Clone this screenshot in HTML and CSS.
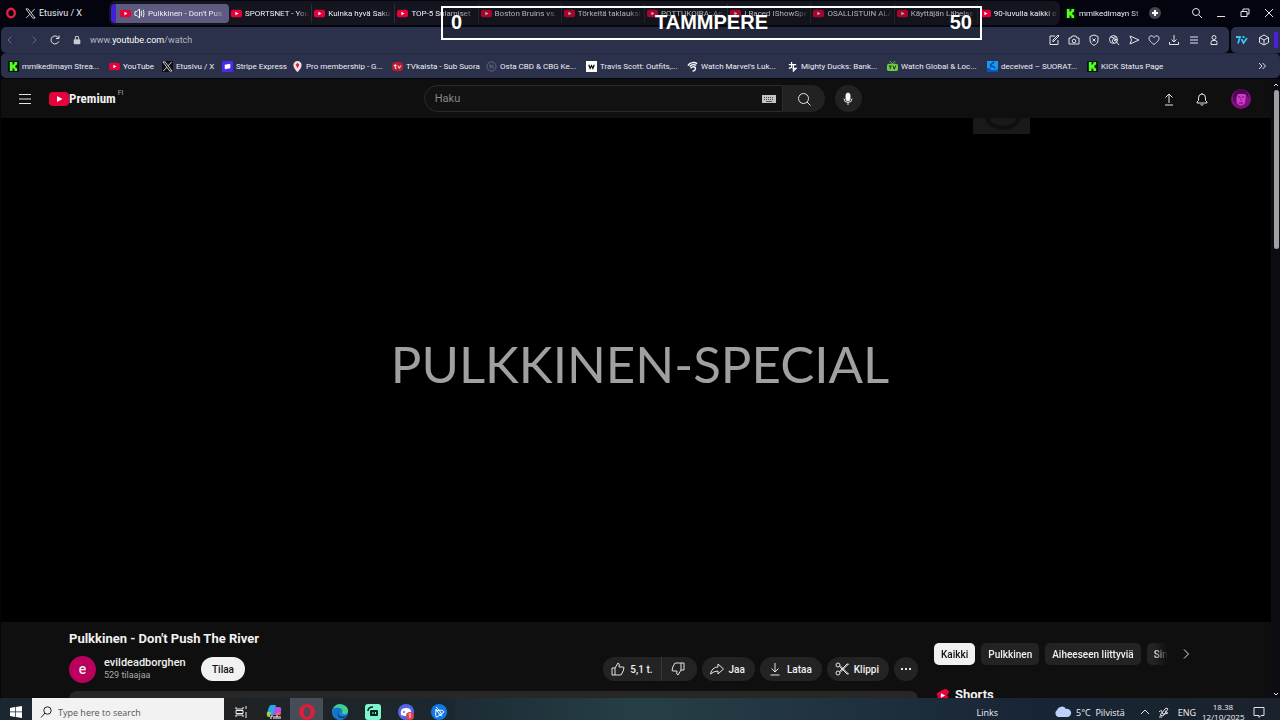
FILE: index.html
```html
<!DOCTYPE html>
<html lang="fi">
<head>
    <meta charset="UTF-8">
    <meta name="viewport" content="width=device-width, initial-scale=1.0">
    <title>Pulkkinen - Don't Push The River</title>
    <link rel="stylesheet" href="styles.css">
</head>
<body>
    <svg class="sprite" aria-hidden="true">
        <symbol id="yt" viewBox="0 0 20 14"><rect width="20" height="14" rx="4" fill="#e8003a"/><path d="M8 4l5.500 3L8 10z" fill="#fff"/></symbol>
        <symbol id="xlogo" viewBox="0 0 12 12"><path d="M1 1h2.500L11 11H8.500z" fill="none" stroke="#ddd"/><path d="M10.500 1L6.700 5.300M5.300 6.800L1.300 11" stroke="#ddd" fill="none"/></symbol>
        <symbol id="kick" viewBox="0 0 12 12"><rect width="12" height="12" rx="1" fill="#04160a"/><path d="M2 1h3v3h1V3h1V1h3v3H9v1H8v2h1v1h1v3H7V9H6V8H5v3H2z" fill="#5f2"/></symbol>
    </svg>

    <header class="browser">
        <div class="tab-bar">
            <svg class="opera" viewBox="0 0 12 12"><ellipse cx="6" cy="6" rx="3.800" ry="4.300" fill="none" stroke="#e5203f" stroke-width="2.400"/></svg>
            <a class="tab pinned" href="#"><svg><use href="#xlogo"/></svg><span>Etusivu / X</span></a>
            <nav class="tab-island" aria-label="Tabs">
                <a class="tab active" href="#"><svg><use href="#yt"/></svg><svg class="speaker" viewBox="0 0 12 12"><path d="M1 4h2l3-3v10L3 8H1zM8 3v6M10 2c1 2 1 6 0 8" fill="none" stroke="#fff"/></svg><span>Pulkkinen - Don't Pus</span></a>
                <a class="tab" href="#"><svg><use href="#yt"/></svg><span>SPORTSNET - You</span></a>
                <a class="tab" href="#"><svg><use href="#yt"/></svg><span>Kuinka hyvä Saku</span></a>
                <a class="tab" href="#"><svg><use href="#yt"/></svg><span>TOP-5 Sulamiset</span></a>
                <a class="tab" href="#"><svg><use href="#yt"/></svg><span>Boston Bruins vs.</span></a>
                <a class="tab" href="#"><svg><use href="#yt"/></svg><span>Törkeitä taklauksi</span></a>
                <a class="tab" href="#"><svg><use href="#yt"/></svg><span>POTTUKOIRA: An</span></a>
                <a class="tab" href="#"><svg><use href="#yt"/></svg><span>I Raced IShowSpe</span></a>
                <a class="tab" href="#"><svg><use href="#yt"/></svg><span>OSALLISTUIN ALA</span></a>
                <a class="tab" href="#"><svg><use href="#yt"/></svg><span>Käyttäjän Läheise</span></a>
                <a class="tab" href="#"><svg><use href="#yt"/></svg><span>90-luvulla kaikki o</span></a>
            </nav>
            <a class="tab kick-tab" href="#"><svg><use href="#kick"/></svg><span>mmikedimayn St</span></a>
            <button class="new-tab" aria-label="New tab"><svg viewBox="0 0 12 12"><circle cx="6" cy="6" r="6" fill="#444450" stroke="none"/><path d="M6 3v6M3 6h6" stroke="#fff" stroke-width="2"/></svg></button>
            <div class="window-buttons">
                <button aria-label="Search tabs"><svg viewBox="0 0 12 12"><circle cx="5" cy="5" r="3.500"/><path d="M7.500 7.500L11 11"/></svg></button>
                <button aria-label="Minimize"><svg viewBox="0 0 12 12"><path d="M2 9.500h8"/></svg></button>
                <button aria-label="Restore"><svg viewBox="0 0 12 12"><path d="M2 4.500h6v5H2zM4 4.500V2h6v5H8"/></svg></button>
                <button aria-label="Close"><svg viewBox="0 0 12 12"><path d="M2 2l8 8M10 2l-8 8"/></svg></button>
            </div>
        </div>

        <div class="address-row">
            <div class="address-bar">
                <button class="dim" aria-label="Back"><svg viewBox="0 0 12 12"><path d="M7.500 2.500L4 6l3.500 3.500"/></svg></button>
                <button class="dim" aria-label="Forward"><svg viewBox="0 0 12 12"><path d="M4.500 2.500L8 6 4.500 9.500"/></svg></button>
                <button aria-label="Reload"><svg viewBox="0 0 12 12"><path d="M9.700 7.500A4 4 0 1 1 9.500 4M10 1.500v3H7"/></svg></button>
                <svg class="lock" viewBox="0 0 12 12"><rect x="2" y="5" width="8" height="6" rx="1" fill="#c9cad2"/><path d="M4 5V3.500a2 2 0 0 1 4 0V5" fill="none" stroke="#c9cad2" stroke-width="1.300"/></svg>
                <span class="url">www.<b>youtube.com</b>/watch</span>
                <div class="tools">
                    <button aria-label="Edit page"><svg viewBox="0 0 12 12"><path d="M7 2H2v8.500h8V6M5 8V6l5-5 1 1-5 5z"/></svg></button>
                    <button aria-label="Snapshot"><svg viewBox="0 0 12 12"><path d="M1 4h2l1-2h4l1 2h2v6H1z"/><circle cx="6" cy="7" r="1.800"/></svg></button>
                    <button aria-label="Ad blocker"><svg viewBox="0 0 12 12"><path d="M6 1l4 1.500V6c0 3-2 4.500-4 5.300C4 10.500 2 9 2 6V2.500zM4.500 4.500l3 3M7.500 4.500l-3 3"/></svg></button>
                    <button aria-label="Translate"><svg viewBox="0 0 12 12"><circle cx="5.500" cy="5.500" r="4"/><path d="M3 3l3 1-2 3 2 2M7 2v4l4 5M6 7l2-2 2 2"/></svg></button>
                    <button aria-label="Send"><svg viewBox="0 0 12 12"><path d="M2 2l9 4-9 4 1.500-4z"/></svg></button>
                    <button aria-label="Favourite"><svg viewBox="0 0 12 12"><path d="M6 10.500C2 7.500 1 6 1 4.200 1 1.500 4.500 1 6 3.500 7.500 1 11 1.500 11 4.200 11 6 10 7.500 6 10.500z"/></svg></button>
                    <button aria-label="Downloads"><svg viewBox="0 0 12 12"><path d="M6 1v7M3.500 5.500L6 8l2.500-2.500M1.500 8v2.500h9V8"/></svg></button>
                    <button aria-label="Menu"><svg viewBox="0 0 12 12"><path d="M2 3h8M2 6h8M2 9h8"/></svg></button>
                    <button aria-label="Profile"><svg viewBox="0 0 12 12"><circle cx="6" cy="3.500" r="2"/><path d="M3 10.500V8.500q0-2 2-2h2q2 0 2 2v2z"/></svg></button>
                </div>
            </div>
            <div class="extensions">
                <button aria-label="7TV"><svg viewBox="0 0 12 12"><path d="M0 3h4L2 9.500M5.500 5l2 4L11 4M6.500 3h2" stroke="#35c4f0" stroke-width="1.800"/></svg></button>
                <button aria-label="Extensions"><svg viewBox="0 0 12 12"><path d="M6 1l4.500 2.500v5L6 11 1.500 8.500v-5zM1.500 3.500L6 6l4.500-2.500M6 6v5"/></svg></button>
                <i class="accent"></i>
            </div>
        </div>

        <nav class="bookmarks" aria-label="Bookmarks">
            <a href="#"><svg><use href="#kick"/></svg>mmikedimayn Strea...</a>
            <a href="#"><svg><use href="#yt"/></svg>YouTube</a>
            <a href="#"><svg class="x-box"><use href="#xlogo"/></svg>Etusivu / X</a>
            <a href="#"><svg viewBox="0 0 12 12"><rect width="12" height="12" rx="1" fill="#4a2af0"/><path d="M3 4l6-1v5L3 9z" fill="#fff"/></svg>Stripe Express</a>
            <a href="#"><svg viewBox="0 0 12 12"><path d="M6 0a4.500 4.500 0 0 1 4.500 4.500C10.500 7.500 6 12 6 12S1.500 7.500 1.500 4.500A4.500 4.500 0 0 1 6 0z" fill="#f5dfe0"/><path d="M6 2l2 2-2 4-2-4z" fill="#d2233d"/></svg>Pro membership - G...</a>
            <a href="#"><svg viewBox="0 0 12 12"><rect y="1" width="12" height="10" rx="4" fill="#b81c2e"/><path d="M2 5h3M3.500 3.500V8H5M6.500 5L8 8l1.500-3" fill="none" stroke="#fff"/></svg>TVkaista - Sub Suora</a>
            <a href="#"><svg viewBox="0 0 12 12"><circle cx="6" cy="6" r="5" fill="none" stroke="#666d80"/><path d="M4.500 8V4l3 4V4" fill="none" stroke="#666d80"/></svg>Osta CBD &amp; CBG Ke...</a>
            <a href="#"><svg viewBox="0 0 12 12"><rect width="12" height="12" fill="#fff"/><path d="M3 4l1.500 4L6 5l1.500 3L9 4" fill="none" stroke="#111" stroke-width="1.400"/></svg>Travis Scott: Outfits,...</a>
            <a href="#"><svg viewBox="0 0 12 12"><path d="M1 5c2-4 8-4 10-2M3 6c2-3 6-2 7-1M4 8c1-2 4-2 5-1M6 11c2 0 4-2 3-4" fill="none" stroke="#fff" stroke-width="1.500"/></svg>Watch Marvel's Luk...</a>
            <a href="#"><svg viewBox="0 0 12 12"><path d="M2 4h8M5 1v6l-3 1M7 4v7l3-3H6" fill="none" stroke="#fff" stroke-width="1.300"/></svg>Mighty Ducks: Bank...</a>
            <a href="#"><svg viewBox="0 0 12 12"><rect y="3" width="12" height="8" rx="2" fill="#72ce3c"/><path d="M3 0l3 3 3-3" fill="none" stroke="#72ce3c"/><path d="M2 5.500h3M3.500 5.500V9M6.500 5L8 9l1.500-4" fill="none" stroke="#123"/></svg>Watch Global &amp; Loc...</a>
            <a href="#"><svg viewBox="0 0 12 12"><rect width="12" height="12" fill="#159bf0"/><path d="M0 8q3-1 4 1t8 0v3H0z" fill="#0b50c0"/><path d="M8 1L4 4v2h3l2 2" fill="none" stroke="#0a3f9c" stroke-width="1.500"/></svg>deceived – SUORAT...</a>
            <a href="#"><svg><use href="#kick"/></svg>KICK Status Page</a>
            <button aria-label="More bookmarks"><svg viewBox="0 0 12 12"><path d="M3 3l3 3-3 3M6.500 3l3 3-3 3"/></svg></button>
        </nav>
    </header>

    <div class="viewport">
        <div class="page">
            <header class="masthead">
                <button class="menu" aria-label="Opas"><svg viewBox="0 0 14 14"><path d="M1 2.500h12M1 7h12M1 11.500h12"/></svg></button>
                <a class="logo" href="#"><svg><use href="#yt"/></svg><span>Premium</span><sup>FI</sup></a>
                <form class="search">
                    <label class="search-box">
                        <input type="text" placeholder="Haku" aria-label="Haku">
                        <svg viewBox="0 0 14 8"><rect width="14" height="8" fill="#c4c4c4"/><path d="M2 2.500h10M2 4.500h10" stroke="#444" stroke-dasharray="1 1"/><path d="M4 6.500h6" stroke="#555"/></svg>
                    </label>
                    <button type="button" aria-label="Hae"><svg viewBox="0 0 14 14"><circle cx="6.500" cy="6.500" r="5"/><path d="M10 10l3.500 3.500"/></svg></button>
                </form>
                <button class="mic" aria-label="Puhehaku"><svg viewBox="0 0 14 14"><rect x="5" y="1" width="4" height="8" rx="2" fill="#fff"/><path d="M3 6.500a4 4 0 0 0 8 0M7 10.500V13"/></svg></button>
                <div class="user-tools">
                    <button aria-label="Luo"><svg viewBox="0 0 14 14"><path d="M7 11V2M3.500 5.500L7 2l3.500 3.500M3 13h8"/></svg></button>
                    <button aria-label="Ilmoitukset"><svg viewBox="0 0 14 14"><path d="M7 1v1M2 11V10l1.500-1.500V6a3.500 4 0 0 1 7 0v2.500L12 10v1zM5.500 12.500q1.500 1.500 3 0"/></svg></button>
                    <button class="avatar" aria-label="Tili"><svg viewBox="0 0 20 20"><circle cx="10" cy="10" r="10" fill="#7c127f"/><path d="M5 4q5-4 10 1l-1 9q-4 5-8 0z" fill="#d23bc5"/><path d="M2 8q1-7 8-8 7 1 8 9l-4-4-7 0-2 4-1 6z" fill="#4a0852"/><path d="M7 8h2M11 8h2M8 14h4" stroke="#5e0a66" stroke-width="1.200"/><path d="M10 8l-.5 3.500h1.500" fill="none" stroke="#9a2497"/></svg></button>
                </div>
            </header>

            <section class="player" aria-label="Video">
                <p>PULKKINEN-SPECIAL</p>
                <svg class="channel-mark" viewBox="0 0 57 16"><rect width="57" height="16" fill="#191919"/><path d="M14 0q4 10 16 10T46 0" fill="none" stroke="#0f0f0f" stroke-width="4"/></svg>
            </section>

            <main class="watch">
                <div class="primary">
                    <h1>Pulkkinen - Don't Push The River</h1>
                    <div class="owner-row">
                        <span class="channel-avatar">e</span>
                        <div class="channel">
                            <a href="#">evildeadborghen</a>
                            <small>529 tilaajaa</small>
                        </div>
                        <button class="subscribe">Tilaa</button>
                        <div class="actions">
                            <div class="like-group">
                                <button><svg viewBox="0 0 14 14"><path d="M1 6h3v7H1zM4 6l3-5q2 0 1 4h4.500q1 1 0 2 .5 1-.5 2 0 1-1 2 0 2-2 2H4"/></svg>5,1 t.</button>
                                <button aria-label="En tykkää"><svg viewBox="0 0 14 14"><path d="M13 8h-3V1h3zM10 8l-3 5q-2 0-1-4H1.500q-1-1 0-2-.5-1 .5-2 0-1 1-2 0-2 2-2H10"/></svg></button>
                            </div>
                            <button><svg viewBox="0 0 14 14"><path d="M8 2l5.500 5L8 12V9Q4 9 .5 12 2 5 8 5z"/></svg>Jaa</button>
                            <button><svg viewBox="0 0 14 14"><path d="M7 1v9M3.500 6.500L7 10l3.500-3.500M2.500 13h9"/></svg>Lataa</button>
                            <button><svg viewBox="0 0 14 14"><circle cx="3" cy="3" r="2"/><circle cx="3" cy="11" r="2"/><path d="M4.500 4.500L12 12h1.500L5 3.500M4.500 9.500L12 2h1.500L5 10.500"/></svg>Klippi</button>
                            <button class="more" aria-label="Lisää"><svg viewBox="0 0 14 14"><path d="M2 7h2M6 7h2M10 7h2" stroke-width="2"/></svg></button>
                        </div>
                    </div>
                    <div class="description"></div>
                </div>
                <aside class="secondary">
                    <div class="chips">
                        <div class="chip-list">
                            <button class="selected">Kaikki</button>
                            <button>Pulkkinen</button>
                            <button>Aiheeseen liittyviä</button>
                            <button>Sin</button>
                        </div>
                        <button class="next" aria-label="Seuraava"><svg viewBox="0 0 14 14"><path d="M5 2.500L9.500 7 5 11.500"/></svg></button>
                    </div>
                    <h2><svg viewBox="0 0 14 14"><path d="M3 4l6-3q4 0 4 3.500L11 7q2 1 1 3l-6 3.500Q2 14 1.500 10L3 7.500Q0 6 3 4z" fill="#e8003a"/><path d="M5.500 5l4 2-4 2z" fill="#fff"/></svg>Shorts</h2>
                </aside>
            </main>
        </div>
        <div class="scrollbar">
            <svg viewBox="0 0 8 8"><path d="M2 5l2-2 2 2"/></svg>
            <i></i>
            <svg viewBox="0 0 8 8"><path d="M2 3l2 2 2-2"/></svg>
        </div>
    </div>

    <footer class="taskbar">
        <div class="taskbar-row">
            <button class="start" aria-label="Start"><svg viewBox="0 0 12 12"><path d="M0 2l5-1v4.600H0zM5.700.9L12 0v5.600H5.700zM0 6.300h5V11l-5-1zM5.700 6.300H12V12l-6.300-.9z" fill="#fff" stroke="none"/></svg></button>
            <label class="task-search">
                <svg viewBox="0 0 12 12"><circle cx="7.500" cy="4.500" r="3.700"/><path d="M5 7l-4 4.500"/></svg>
                <input type="text" placeholder="Type here to search" aria-label="Type here to search">
            </label>
            <div class="apps">
                <button aria-label="Task view"><svg viewBox="0 0 16 16"><path d="M3 3v2h7V3M3 13v-2h7v2M3 6.500h7v3H3zM13 2v3M13 8v6" fill="none" stroke="#eee"/></svg></button>
                <button aria-label="Copilot"><svg viewBox="0 0 16 16"><path d="M5 1h5L7 13H3q-3 0-2-4l2-6q1-2 2-2z" fill="#26a9e8"/><path d="M1 8h4l-1 5q-4 0-3-5z" fill="#a9ce37"/><path d="M9 3h4q3 0 2 4l-1 5q-1 2-3 2H6z" fill="#b651dd"/><path d="M11 8h4l-1 4q-1 2-3 2H8z" fill="#f25c78"/><path d="M4 11h11v4H4z" fill="#222"/><path d="M5 15v-3h2M8 12v3M10 15v-3h2v3M14 12v3" stroke="#fff" fill="none"/></svg></button>
                <button class="current" aria-label="Opera"><svg viewBox="0 0 16 16"><circle cx="8" cy="8" r="8" fill="#d81f3c"/><ellipse cx="8" cy="8" rx="3.200" ry="5" fill="#454d56"/></svg></button>
                <button aria-label="Edge"><svg viewBox="0 0 16 16"><circle cx="8" cy="8" r="8" fill="#1484d8"/><path d="M1 5q3-6 9-4.500 7 2 6 8-2 3-6 1 2-5-3-5.500Q3 4 0 8z" fill="#42d18a"/><path d="M1 5q5-3 8 0l-3 5q1 4 6 4-5 4-10-1-3-4-1-8z" fill="#1675c8"/><path d="M8 6q-3 3-1 5 3 3 8 0-1 2-3 3-5 1-6-3-1-3 2-5z" fill="#123a70"/></svg></button>
                <button aria-label="Streaming"><svg viewBox="0 0 16 16"><rect width="16" height="16" rx="3" fill="#7ef5cc"/><rect x="5" y="6" width="8" height="6" rx="1" fill="#0a2424"/><path d="M3 7q0-4 5-4" fill="none" stroke="#0a2424" stroke-width="1.500"/><path d="M8 8v2M10.500 8v2" stroke="#7ef5cc"/></svg></button>
                <button aria-label="Discord"><svg viewBox="0 0 16 16"><circle cx="8" cy="8" r="8" fill="#5865e8"/><path d="M4 5q4-2 8 0 2 3 1 6-5 2-10 0-1-3 1-6z" fill="#fff"/><circle cx="6" cy="8" r="1" fill="#5865e8"/><circle cx="12" cy="12" r="4" fill="#e33e49"/><path d="M11 10.500l1-1V14" stroke="#fff" fill="none"/></svg></button>
                <button aria-label="Battle.net"><svg viewBox="0 0 16 16"><circle cx="8" cy="8" r="8" fill="#1279e8"/><path d="M5 3q2 1 5 6 2 4-1 2L5 5q-1 9 1 8l7-5q-1-3-8-1" fill="none" stroke="#fff"/></svg></button>
            </div>
            <div class="tray">
                <span class="links">Links</span>
                <svg class="cloud" viewBox="0 0 18 12"><path d="M4 11a4 4 0 0 1-1-7 5 5 0 0 1 9-1 4 4 0 0 1 2 8z" fill="#bcd2f8"/></svg>
                <span class="weather">5°C&nbsp; Pilvistä</span>
                <svg class="up" viewBox="0 0 12 12"><path d="M2 8l4-4 4 4"/></svg>
                <svg class="pen" viewBox="0 0 12 12"><path d="M2 9l6-7 2 1-5 7zM1 6q3-3 3 0t3 2 3-1-3-2M1 11h3"/></svg>
                <span class="lang">ENG</span>
                <time>18.38<br>12/10/2025</time>
                <svg class="notice" viewBox="0 0 12 12"><path d="M1 1.500h10v8H8l-2 2v-2H1z"/></svg>
            </div>
        </div>
    </footer>

    <div class="scoreboard">
        <span>0</span>
        <strong>TAMMPERE</strong>
        <span>50</span>
    </div>
</body>
</html>
```
FILE: styles.css
```css
* {
    box-sizing: border-box;
}

body {
    margin: 0;
    height: 100vh;
    display: flex;
    flex-direction: column;
    overflow: hidden;
    background: #04040f;
    color: #f1f1f1;
    font-family: Roboto, sans-serif;
    font-size: 10px;
}

a {
    color: inherit;
    text-decoration: none;
}

button {
    display: flex;
    align-items: center;
    justify-content: center;
    flex-shrink: 0;
    padding: 0;
    border: 0;
    background: none;
    color: inherit;
    font: inherit;
}

svg {
    width: 12px;
    height: 12px;
    flex-shrink: 0;
}

button svg,
.scrollbar svg,
.tray svg,
.task-search svg {
    fill: none;
    stroke: #e4e4ea;
}

.sprite {
    position: absolute;
    width: 0;
    height: 0;
}

/* browser chrome */
.browser {
    flex-shrink: 0;
    height: 79px;
    padding-left: 1px;
    font-size: 8px;
    color: #eeeff6;
}

.tab-bar {
    display: flex;
    align-items: center;
    height: 27px;
    padding-bottom: 1px;
}

.opera {
    margin: 0 6px 0 4px;
}

.tab {
    display: flex;
    align-items: center;
    flex: 1 1 0;
    min-width: 0;
    gap: 3px;
    height: 19px;
    padding: 0 2px;
    border-right: 1px solid #2c2c38;
}

.tab svg {
    width: 11px;
    height: 11px;
}

.tab span {
    flex: 1;
    overflow: hidden;
    white-space: nowrap;
    mask-image: linear-gradient(to right, #000 80%, transparent);
}

.tab.pinned {
    flex: 0 0 86px;
    border: 0;
    font-size: 9px;
}

.tab.pinned span {
    mask-image: none;
}

.tab-island {
    display: flex;
    align-items: center;
    flex: 1;
    min-width: 0;
    height: 24px;
    padding-left: 2px;
    border-radius: 6px;
    background: #15151f;
}

.tab.active {
    flex: 0 0 118px;
    padding-left: 4px;
    border: 0;
    border-left: 5px solid #4320d8;
    border-radius: 4px;
    background: #5d5c80;
}

.tab:last-child {
    border: 0;
}

.tab.kick-tab {
    flex: 0 0 84px;
    margin-left: 3px;
    border: 0;
}

.new-tab {
    margin: 0 30px 0 2px;
}

.window-buttons {
    display: flex;
    gap: 12px;
    padding-right: 5px;
}

.address-row {
    display: flex;
    gap: 2px;
    height: 26px;
}

.address-bar,
.extensions,
.bookmarks {
    display: flex;
    align-items: center;
    border-radius: 5px;
    background: #2b314b;
}

.address-bar {
    flex: 1;
    padding: 0 9px 0 3px;
}

.address-bar > button {
    width: 12px;
    margin-right: 12px;
}

.address-bar > button:nth-child(3) {
    margin: 0 11px 0 -3px;
}

.dim {
    opacity: 0.35;
}

.lock {
    width: 10px;
    height: 12px;
    margin-right: 8px;
}

.url {
    color: #b5b8c6;
    font-size: 9px;
}

.url b {
    color: #fff;
    font-weight: 400;
}

.tools {
    display: flex;
    gap: 8px;
    margin-left: auto;
}

.extensions {
    gap: 10px;
    padding-left: 5px;
    border-radius: 5px 0 0 5px;
}

.accent {
    width: 4px;
    height: 16px;
    margin-left: -6px;
    margin-right: 2px;
    background: #4d1fe0;
}

.bookmarks {
    display: grid;
    grid-template-columns: 101px 53px 60px 70px 100px 94px 100px 101px 100px 100px 100px 100px 100px 1fr;
    height: 25px;
    padding-left: 7px;
    border-top: 1px solid #242a42;
}

.bookmarks a {
    display: flex;
    align-items: center;
    gap: 3px;
    white-space: nowrap;
}

.bookmarks a svg {
    width: 11px;
    height: 11px;
}

.x-box {
    background: #101014;
}

.bookmarks button {
    justify-self: end;
    padding-right: 12px;
}

/* youtube */
.viewport {
    display: flex;
    flex: 1;
    min-height: 0;
    padding-left: 1px;
}

.page {
    display: flex;
    flex-direction: column;
    flex: 1;
    min-width: 0;
    overflow: hidden;
    background: #0f0f0f;
}

.masthead {
    display: flex;
    align-items: center;
    flex-shrink: 0;
    height: 39px;
    padding: 0 20px 0 17px;
}

.masthead svg {
    width: 14px;
    height: 14px;
}

.logo {
    display: flex;
    align-items: center;
    margin-left: 17px;
}

.logo svg {
    width: 20px;
    height: 14px;
}

.logo span {
    font: bold 13px "Liberation Sans Narrow", "Roboto Condensed", Roboto, sans-serif;
}

.logo sup {
    align-self: flex-start;
    margin-left: 2px;
    color: #aaa;
    font-size: 7px;
    line-height: 4px;
}

.search {
    display: flex;
    height: 27px;
    width: 401px;
    margin-left: auto;
}

.search-box {
    display: flex;
    align-items: center;
    flex: 1;
    padding: 0 6px 0 10px;
    border: 1px solid #2b2b2b;
    border-radius: 14px 0 0 14px;
    background: #121212;
}

.search-box input {
    flex: 1;
    min-width: 0;
    padding: 0;
    border: 0;
    background: none;
    color: #fff;
    font: 11px Roboto, sans-serif;
}

.search-box input::placeholder {
    color: #888;
}

.search-box svg {
    height: 8px;
}

.search button {
    width: 42px;
    border-radius: 0 14px 14px 0;
    background: #222;
}

.mic {
    width: 27px;
    height: 27px;
    margin: 0 auto 0 10px;
    border-radius: 50%;
    background: #222;
}

.user-tools {
    display: flex;
    align-items: center;
    gap: 19px;
}

.avatar {
    margin-left: 3px;
}

.masthead .avatar svg {
    width: 20px;
    height: 20px;
    stroke: none;
}

.player {
    position: relative;
    display: flex;
    align-items: center;
    justify-content: center;
    flex: 1;
    min-height: 0;
    background: #000;
}

.player p {
    margin: 0;
    padding: 0 0 14px 8px;
    color: #a0a0a0;
    font: 400 51px Lato, sans-serif;
}

.channel-mark {
    position: absolute;
    top: 0;
    right: 241px;
    width: 57px;
    height: 16px;
}

.watch {
    display: flex;
    gap: 16px;
    height: 76px;
    padding-left: 68px;
}

.primary {
    flex: 1;
    min-width: 0;
}

h1 {
    margin: 0;
    padding-top: 9px;
    font-size: 13px;
    line-height: 16px;
}

.owner-row {
    display: flex;
    align-items: center;
    height: 40px;
}

.owner-row,
.description {
    margin-top: 2px;
}

.channel-avatar {
    width: 27px;
    height: 27px;
    border-radius: 50%;
    background: #b8005c;
    font-size: 14px;
    font-weight: 500;
    line-height: 27px;
    text-align: center;
}

.channel {
    display: flex;
    flex-direction: column;
    width: 97px;
    margin-left: 8px;
    font-size: 11px;
    font-weight: 500;
    line-height: 13px;
}

.channel small {
    color: #aaa;
    font-size: 9px;
    font-weight: 400;
}

.subscribe {
    height: 24px;
    padding: 0 11px;
    border-radius: 12px;
    background: #f1f1f1;
    color: #0f0f0f;
    font-weight: 500;
}

.actions {
    display: flex;
    gap: 5px;
    margin-left: auto;
    font-weight: 500;
}

.actions svg {
    width: 14px;
    height: 14px;
}

.like-group {
    display: flex;
    border-radius: 12px;
    background: #232323;
}

.actions button {
    gap: 5px;
    height: 24px;
    padding: 0 10px 0 8px;
    border-radius: 12px;
    background: #232323;
}

.like-group button:first-child {
    padding-right: 8px;
}

.like-group button:last-child {
    padding: 0 12px 0 9px;
    border-left: 1px solid #383838;
    border-radius: 0 12px 12px 0;
}

.actions .more {
    width: 24px;
    padding: 0;
}

.description {
    height: 20px;
    border-radius: 8px;
    background: #272727;
}

.secondary {
    flex: 0 0 337px;
    padding-top: 21px;
}

.chips {
    display: flex;
    align-items: center;
    gap: 11px;
}

.chip-list {
    display: flex;
    gap: 6px;
    width: 234px;
    overflow: hidden;
    mask-image: linear-gradient(to right, #000 94%, transparent);
}

.chip-list button {
    height: 22px;
    padding: 0 7px;
    border-radius: 5px;
    background: #232323;
    font-weight: 500;
}

.chip-list .selected {
    background: #f1f1f1;
    color: #0f0f0f;
}

.next svg {
    width: 14px;
    height: 14px;
}

h2 {
    display: flex;
    align-items: center;
    gap: 5px;
    margin: 21px 0 0 1px;
    font-size: 13px;
    line-height: 18px;
}

h2 svg {
    width: 15px;
    height: 15px;
}

.scrollbar {
    display: flex;
    flex-direction: column;
    align-items: center;
    width: 9px;
    padding: 2px 0 0 1px;
    background: #0c0c12;
}

.scrollbar svg {
    width: 8px;
    height: 8px;
}

.scrollbar svg:last-child {
    margin-top: auto;
}

.scrollbar i {
    width: 5px;
    height: 159px;
    margin-top: 1px;
    border-radius: 3px;
    background: #a0a0a0;
}

/* windows taskbar */
.taskbar {
    flex-shrink: 0;
    height: 22px;
    overflow: hidden;
    background: linear-gradient(to right, #1b2630, #1c2a34 35%, #263f46 50%, #21323f 65%, #182536 80%, #1a222c);
    font-family: "Open Sans", sans-serif;
    font-size: 9px;
}

.taskbar-row {
    display: flex;
    align-items: center;
    height: 28px;
}

.start {
    width: 32px;
}

.task-search {
    display: flex;
    align-items: center;
    align-self: stretch;
    gap: 6px;
    width: 192px;
    padding-left: 8px;
    background: #f2f2f2;
}

.task-search svg {
    stroke: #222;
}

.task-search input {
    flex: 1;
    min-width: 0;
    padding: 0;
    border: 0;
    background: none;
    font: 9px "Open Sans", sans-serif;
}

.task-search input::placeholder {
    color: #555;
}

.apps {
    display: flex;
    align-self: stretch;
    background: linear-gradient(to right, #202224, #1b2830);
}

.apps button {
    width: 33px;
}

.apps svg {
    width: 16px;
    height: 16px;
    stroke: none;
}

.apps .current {
    background: #454d56;
}

.tray {
    display: flex;
    align-items: center;
    margin-left: auto;
    padding-right: 15px;
}

.tray .cloud {
    width: 18px;
    stroke: none;
}

.links {
    margin-right: 56px;
}

.weather {
    margin: 0 14px 0 4px;
}

.pen {
    margin: 0 8px 0 7px;
}

.tray time {
    width: 42px;
    margin: 0 9px 0 6px;
    font-size: 8px;
    line-height: 10px;
    text-align: center;
}

/* stream overlay on top of everything */
.scoreboard {
    position: absolute;
    top: 6px;
    left: 441px;
    display: grid;
    grid-template-columns: 1fr auto 1fr;
    width: 541px;
    height: 34px;
    padding: 3px 8px;
    border: 2px solid #fff;
    background: rgba(18, 18, 24, 0.3);
    color: #fff;
    font: bold 20px/22px "Liberation Sans", sans-serif;
}

.scoreboard span:last-child {
    text-align: right;
}
```
